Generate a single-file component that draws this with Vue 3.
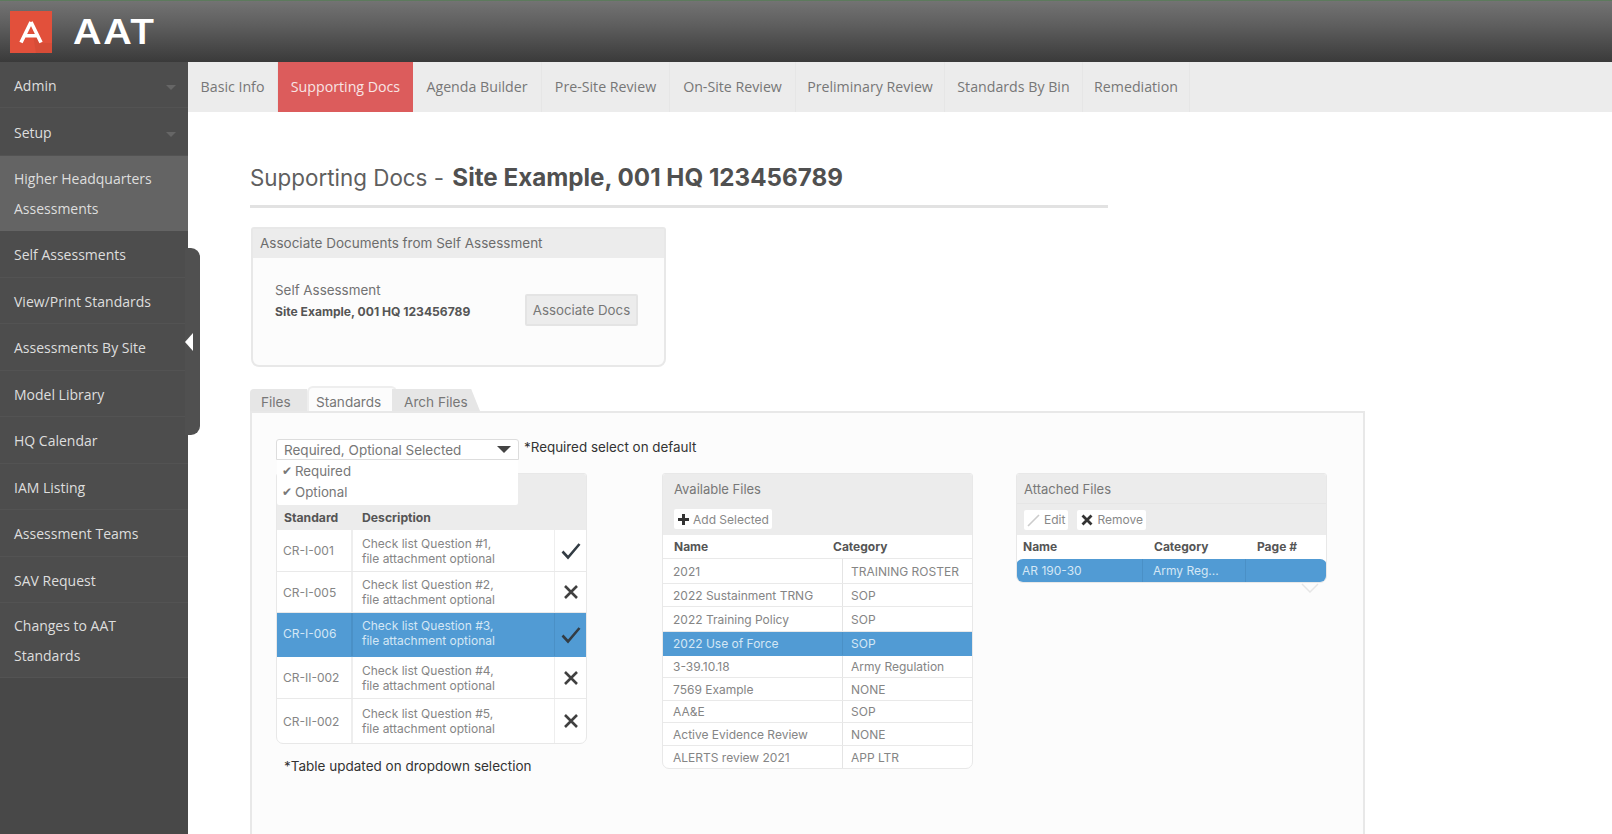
<script setup>
const navItems = [
  { label: 'Admin', caret: true, h: 46 },
  { label: 'Setup', caret: true, h: 48 },
  { label: 'Higher Headquarters Assessments', h: 75, active: true },
  { label: 'Self Assessments', h: 47 },
  { label: 'View/Print Standards', h: 46 },
  { label: 'Assessments By Site', h: 47 },
  { label: 'Model Library', h: 46 },
  { label: 'HQ Calendar', h: 47 },
  { label: 'IAM Listing', h: 46 },
  { label: 'Assessment Teams', h: 47 },
  { label: 'SAV Request', h: 46 },
  { label: 'Changes to AAT Standards', h: 75 }
]
const tabs = [
  { label: 'Basic Info', w: 90 },
  { label: 'Supporting Docs', w: 135, active: true },
  { label: 'Agenda Builder', w: 129 },
  { label: 'Pre-Site Review', w: 128 },
  { label: 'On-Site Review', w: 126 },
  { label: 'Preliminary Review', w: 149 },
  { label: 'Standards By Bin', w: 138 },
  { label: 'Remediation', w: 107 }
]
const standards = [
  { id: 'CR-I-001', q: 'Check list Question #1,', ok: true, h: 42 },
  { id: 'CR-I-005', q: 'Check list Question #2,', ok: false, h: 41 },
  { id: 'CR-I-006', q: 'Check list Question #3,', ok: true, selected: true, h: 44 },
  { id: 'CR-II-002', q: 'Check list Question #4,', ok: false, h: 42 },
  { id: 'CR-II-002', q: 'Check list Question #5,', ok: false, h: 44 }
]
const files = [
  { n: '2021', c: 'TRAINING ROSTER', h: 25 },
  { n: '2022 Sustainment TRNG', c: 'SOP', h: 23 },
  { n: '2022 Training Policy', c: 'SOP', h: 25 },
  { n: '2022 Use of Force', c: 'SOP', selected: true, h: 24 },
  { n: '3-39.10.18', c: 'Army Regulation', h: 22 },
  { n: '7569 Example', c: 'NONE', h: 23 },
  { n: 'AA&E', c: 'SOP', h: 22 },
  { n: 'Active Evidence Review', c: 'NONE', h: 23 },
  { n: 'ALERTS review 2021', c: 'APP LTR', h: 22 }
]
</script>

<template>
  <div class="app">
    <header class="topbar">
      <div class="logo">
        <svg width="42" height="42" viewBox="0 0 42 42">
          <rect width="42" height="42" fill="#e2503b" />
          <path d="M21 12 L31 32 H42 V42 H26 Z" fill="#c94634" opacity=".45" />
          <path d="M21 11 L11 31.5 M21 11 L31 31.5 M14.5 24.8 H27.5" fill="none" stroke="#fff" stroke-width="3.6" />
        </svg>
      </div>
      <div class="brand">AAT</div>
    </header>

    <div class="body">
      <aside class="sidebar">
        <nav>
          <a
            v-for="item in navItems"
            :key="item.label"
            class="nav-item"
            :class="{ active: item.active }"
            :style="{ height: item.h + 'px' }"
          >
            <span class="nav-label">{{ item.label }}</span>
            <span v-if="item.caret" class="nav-caret"></span>
          </a>
        </nav>
        <div class="handle"><span class="handle-arrow"></span></div>
      </aside>

      <main class="main">
        <div class="tabbar">
          <a
            v-for="t in tabs"
            :key="t.label"
            class="tab"
            :class="{ active: t.active }"
            :style="{ width: t.w + 'px' }"
          >{{ t.label }}</a>
        </div>

        <div class="content">
          <h1 class="title">Supporting Docs - <strong>Site Example, 001 HQ 123456789</strong></h1>

          <section class="assoc">
            <div class="assoc-head">Associate Documents from Self Assessment</div>
            <div class="assoc-body">
              <div>
                <div class="assoc-label">Self Assessment</div>
                <div class="assoc-value">Site Example, 001 HQ 123456789</div>
              </div>
              <button class="assoc-btn">Associate Docs</button>
            </div>
          </section>

          <div class="subtabs">
            <span class="subtab first">Files</span>
            <span class="subtab last">Arch Files</span>
            <span class="subtab current">Standards</span>
          </div>

          <section class="tabpanel">
            <div class="filter-row">
              <div class="select-wrap">
                <div class="select">
                  <span>Required, Optional Selected</span>
                  <span class="select-caret"></span>
                </div>
                <div class="dropdown">
                  <div class="opt"><span class="tick">✔</span>Required</div>
                  <div class="opt"><span class="tick">✔</span>Optional</div>
                </div>
              </div>
              <span class="note">*Required select on default</span>
            </div>

            <div class="columns">
              <div class="col-left">
                <div class="card">
                  <div class="std-top"></div>
                  <div class="std-head">
                    <span class="s1">Standard</span>
                    <span>Description</span>
                  </div>
                  <div
                    v-for="(s, i) in standards"
                    :key="i"
                    class="std-row"
                    :class="{ selected: s.selected }"
                    :style="{ height: s.h + 'px' }"
                  >
                    <div class="s-id">{{ s.id }}</div>
                    <div class="s-desc">{{ s.q }}<br />file attachment optional</div>
                    <div class="s-mark">
                      <svg v-if="s.ok" width="20" height="18" viewBox="0 0 20 18">
                        <path d="M1.5 9.5 L7 15.5 L18.5 2" fill="none" stroke="#333c44" stroke-width="2.6" />
                      </svg>
                      <svg v-else width="16" height="16" viewBox="0 0 16 16">
                        <path d="M2 2 L14 14 M14 2 L2 14" fill="none" stroke="#404040" stroke-width="2.6" />
                      </svg>
                    </div>
                  </div>
                </div>
                <div class="table-note">*Table updated on dropdown selection</div>
              </div>

              <div class="card files-card">
                <div class="card-title tall">Available Files</div>
                <div class="toolbar tool-plain">
                  <span class="tool-btn add">
                    <svg width="13" height="13" viewBox="0 0 13 13"><path d="M6.5 1 V12 M1 6.5 H12" stroke="#333" stroke-width="3" /></svg>
                    Add Selected
                  </span>
                </div>
                <div class="f-head">
                  <span class="f-name">Name</span>
                  <span>Category</span>
                </div>
                <div
                  v-for="f in files"
                  :key="f.n"
                  class="f-row"
                  :class="{ selected: f.selected }"
                  :style="{ height: f.h + 'px' }"
                >
                  <div class="f-n">{{ f.n }}</div>
                  <div class="f-c">{{ f.c }}</div>
                </div>
              </div>

              <div class="attached">
                <div class="card">
                  <div class="card-title">Attached Files</div>
                  <div class="toolbar">
                    <span class="tool-btn edit">
                      <svg width="14" height="14" viewBox="0 0 14 14"><path d="M1 13 L12 2" stroke="#ccc" stroke-width="1.6" /></svg>
                      Edit
                    </span>
                    <span class="tool-btn remove">
                      <svg width="12" height="12" viewBox="0 0 12 12"><path d="M1.5 1.5 L10.5 10.5 M10.5 1.5 L1.5 10.5" stroke="#333" stroke-width="2.8" /></svg>
                      Remove
                    </span>
                  </div>
                  <div class="a-head">
                    <span class="a1">Name</span>
                    <span class="a2">Category</span>
                    <span class="a3">Page #</span>
                  </div>
                  <div class="a-row">
                    <div class="a1">AR 190-30</div>
                    <div class="a2">Army Reg...</div>
                    <div class="a3"></div>
                  </div>
                </div>
                <svg class="a-pointer" width="18" height="10" viewBox="0 0 18 10">
                  <path d="M1 1 L9 9 L17 1" fill="none" stroke="#e6e6e6" stroke-width="1.5" />
                </svg>
              </div>
            </div>
          </section>
        </div>
      </main>
    </div>
  </div>
</template>

<style scoped>
.app {
  width: 1612px;
  height: 834px;
  overflow: hidden;
  background: #fff;
  font-family: Inter, "Liberation Sans", sans-serif;
  color: #666;
}
.topbar {
  height: 62px;
  box-sizing: border-box;
  display: flex;
  align-items: center;
  padding: 0 0 0 10px;
  border-top: 1px solid #5d7a5d;
  background: linear-gradient(#737373 0%, #5e5e5e 40%, #3a3a3a 100%);
}
.logo { width: 42px; height: 42px; display: flex; }
.brand {
  margin-left: 21px;
  font-family: Inter, sans-serif;
  font-size: 34px;
  font-weight: 600;
  letter-spacing: 1px;
  color: #fff;
  line-height: 42px;
  transform: scaleX(1.15);
  transform-origin: left center;
}
.body { display: flex; height: 772px; }
.sidebar {
  position: relative;
  width: 188px;
  flex: none;
  background: #484848;
}
.nav-item {
  display: flex;
  align-items: center;
  box-sizing: border-box;
  padding: 2px 14px 0;
  font-family: "Open Sans", sans-serif;
  font-size: 14px;
  line-height: 30px;
  color: #dedede;
  background: #4d4d4d;
  border-bottom: 1px solid #535353;
  position: relative;
}
.nav-item.active { background: #646464; border-bottom-color: #646464; }
.nav-label { max-width: 160px; }
.nav-caret {
  position: absolute;
  right: 12px;
  top: 50%;
  border: 5px solid transparent;
  border-top: 5px solid #666;
  border-bottom: 0;
}
.handle {
  position: absolute;
  left: 185px;
  top: 186px;
  width: 15px;
  height: 187px;
  background: #505050;
  border-radius: 0 9px 9px 0;
  display: flex;
  align-items: center;
}
.handle-arrow {
  width: 0;
  height: 0;
  border-top: 9px solid transparent;
  border-bottom: 9px solid transparent;
  border-right: 8px solid #fff;
}
.main { flex: 1; min-width: 0; }
.tabbar { display: flex; height: 50px; background: #ececec; }
.tab {
  display: flex;
  align-items: center;
  justify-content: center;
  box-sizing: border-box;
  padding-bottom: 2px;
  border-right: 1px solid #e6e6e6;
  font-family: "Open Sans", sans-serif;
  font-size: 14.2px;
  color: #777;
}
.tab.active { background: #dc5c5c; color: #f8e4e4; border-right: 0; }
.content { padding: 0 0 0 62px; }
.title {
  margin: 0;
  width: 858px;
  height: 96px;
  box-sizing: border-box;
  padding-top: 50px;
  border-bottom: 3px solid #e2e2e2;
  font-size: 22.4px;
  font-weight: 400;
  line-height: 32px;
  color: #5f5f5f;
}
.title strong { margin-left: 2px; font-size: 24.2px; font-weight: 700; color: #505050; }
.assoc {
  margin: 19px 0 0 1px;
  width: 415px;
  height: 140px;
  box-sizing: border-box;
  background: #fcfcfc;
  border: 2px solid #e8e8e8;
  border-radius: 3px 3px 8px 8px;
}
.assoc-head {
  height: 29px;
  line-height: 29px;
  padding-left: 7px;
  background: #ececec;
  font-size: 13.5px;
  color: #6c6c6c;
}
.assoc-body {
  display: flex;
  justify-content: space-between;
  padding: 22px 26px 0 22px;
}
.assoc-label { font-size: 13.4px; line-height: 20px; color: #727272; }
.assoc-value { margin-top: 3px; font-size: 12.1px; font-weight: 700; line-height: 18px; color: #555; }
.assoc-btn {
  margin-top: 14px;
  width: 113px;
  height: 32px;
  padding: 0;
  background: #ececec;
  border: 2px solid #e4e4e4;
  border-radius: 2px;
  font: 400 13.3px Inter, sans-serif;
  color: #777;
}
.subtabs {
  display: flex;
  align-items: flex-end;
  height: 23px;
  margin-top: 21px;
  font-size: 13.6px;
  color: #777;
}
.subtab { display: flex; align-items: center; height: 22px; box-sizing: border-box; padding-top: 3px; }
.subtab.first { width: 57px; padding-left: 11px; background: #e6e6e6; border-radius: 4px 0 0 0; }
.subtab.current {
  order: 1;
  position: relative;
  width: 90px;
  height: 25px;
  padding-left: 7px;
  padding-top: 5px;
  background: #fcfcfc;
  border: 2px solid #eee;
  border-bottom: 0;
  border-radius: 6px 6px 0 0;
}
.subtab.last {
  order: 2;
  width: 88px;
  margin-left: -5px;
  padding-left: 12px;
  background: #e6e6e6;
  clip-path: polygon(0 0, 90% 0, 100% 100%, 0 100%);
}
.tabpanel {
  width: 1115px;
  height: 430px;
  box-sizing: border-box;
  padding: 26px 0 0 24px;
  background: #fcfcfc;
  border: 2px solid #e8e8e8;
  border-bottom: 0;
}
.filter-row { display: flex; height: 34px; }
.select-wrap { position: relative; width: 243px; }
.select {
  height: 21px;
  box-sizing: border-box;
  display: flex;
  align-items: center;
  justify-content: space-between;
  padding: 0 7px;
  background: #fff;
  border: 1px solid #ddd;
  border-radius: 3px 3px 0 0;
  font-size: 13.5px;
  color: #777;
}
.select-caret {
  width: 0;
  height: 0;
  border-left: 7px solid transparent;
  border-right: 7px solid transparent;
  border-top: 7px solid #444;
}
.dropdown {
  position: absolute;
  left: 1px;
  top: 21px;
  z-index: 2;
  width: 241px;
  height: 45px;
  box-sizing: border-box;
  background: #fff;
  font-size: 13.3px;
  color: #777;
  border-radius: 0 0 2px 2px;
}
.opt { display: flex; align-items: center; height: 21px; padding-left: 5px; }
.tick { font-size: 12px; color: #777; width: 13px; }
.note { margin-left: 5px; font-size: 13.4px; line-height: 17px; color: #333; }
.columns { display: flex; align-items: flex-start; }
.col-left { width: 311px; }
.card {
  box-sizing: border-box;
  width: 311px;
  background: #fff;
  border: 1px solid #e8e8e8;
  border-radius: 3px 3px 7px 7px;
  overflow: hidden;
}
.std-top { height: 34px; background: #ececec; }
.std-head {
  display: flex;
  align-items: center;
  box-sizing: border-box;
  height: 22px;
  padding: 0 0 4px 7px;
  background: #ececec;
  font-size: 12.2px;
  font-weight: 700;
  color: #555;
}
.s1 { width: 78px; }
.std-row { display: flex; border-bottom: 1px solid #e9e9e9; box-sizing: border-box; font-size: 12px; color: #858585; }
.std-row:last-child { border-bottom: 0; }
.s-id { width: 76px; display: flex; align-items: center; padding-left: 6px; box-sizing: border-box; border-right: 2px solid #eee; }
.s-desc { flex: 1; padding-left: 9px; line-height: 15px; white-space: nowrap; margin: auto 0; }
.s-mark { width: 31px; flex: none; display: flex; align-items: center; justify-content: center; border-left: 1px solid #eee; }
.std-row.selected { background: #519bd4; color: #d4e7f5; border-bottom-color: #519bd4; }
.std-row.selected .s-id { border-right-color: #4a90c6; padding-bottom: 3px; }
.std-row.selected .s-desc { padding-bottom: 3px; }
.std-row.selected .s-mark { border-left-color: #4a90c6; }
.table-note { margin: 13px 0 0 8px; font-size: 13.5px; line-height: 18px; color: #333; }
.files-card { margin-left: 75px; }
.card-title {
  height: 30px;
  line-height: 30px;
  padding-left: 7px;
  background: #ececec;
  font-size: 13px;
  color: #777;
  border-bottom: 1px solid #e6e6e6;
  box-sizing: border-box;
}
.card-title.tall { height: 28px; border-bottom: 0; line-height: 30px; padding-left: 11px; }
.toolbar {
  display: flex;
  align-items: center;
  gap: 9px;
  height: 31px;
  padding-left: 7px;
  background: #ececec;
  box-sizing: border-box;
}
.tool-plain { height: 33px; padding: 1px 0 0 11px; }
.tool-btn {
  display: flex;
  align-items: center;
  gap: 3px;
  height: 20px;
  padding: 0 3px;
  background: #fff;
  border-radius: 2px;
  font-size: 12px;
  color: #888;
}
.tool-btn.remove svg { margin-right: 1px; margin-left: 1px; }
.f-head {
  display: flex;
  align-items: center;
  height: 24px;
  padding: 0 0 0 11px;
  font-size: 12px;
  font-weight: 700;
  color: #555;
  border-bottom: 1px solid #e9e9e9;
  box-sizing: border-box;
}
.f-name { width: 159px; }
.f-row { display: flex; box-sizing: border-box; border-bottom: 1px solid #e9e9e9; font-size: 12px; color: #858585; align-items: center; }
.f-row:last-child { border-bottom: 0; }
.f-n { width: 180px; height: 100%; display: flex; align-items: center; padding: 0 0 0 10px; box-sizing: border-box; border-right: 1px solid #e4e4e4; white-space: nowrap; }
.f-c { padding: 0 0 0 8px; white-space: nowrap; }
.f-row.selected { background: #519bd4; color: #d4e7f5; border-bottom-color: #519bd4; }
.f-row.selected .f-n { border-right-color: #4a90c6; }
.attached { position: relative; margin-left: 43px; }
.a-head {
  display: flex;
  align-items: center;
  height: 24px;
  padding-bottom: 2px;
  box-sizing: border-box;
  font-size: 12px;
  font-weight: 700;
  color: #555;
}
.a-head .a1, .a-row .a1 { width: 127px; padding-left: 6px; box-sizing: border-box; flex: none; }
.a-head .a2, .a-row .a2 { width: 103px; padding-left: 10px; box-sizing: border-box; flex: none; }
.a-head .a3 { padding-left: 10px; }
.a-row {
  display: flex;
  height: 24px;
  margin: 0 -1px -1px;
  background: #519bd4;
  border-radius: 7px;
  font-size: 12px;
  line-height: 24px;
  color: #d4e7f5;
}
.a-row .a1, .a-row .a2 { border-right: 1px solid #4a90c6; }
.a-pointer {
  position: absolute;
  left: 285px;
  top: 110px;
}
</style>
